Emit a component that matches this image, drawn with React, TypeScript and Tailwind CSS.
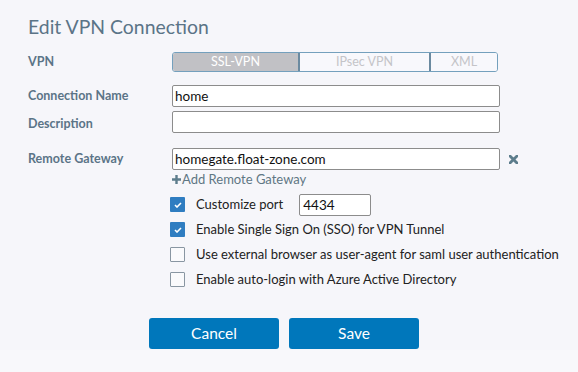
import React from 'react';

const labelCls = "w-[144px] shrink-0 text-[12.5px] font-bold text-[#5b7487]";
const inputCls = "h-[22px] w-[328px] rounded-[2px] border border-[#8c8c8c] bg-white px-[2px] text-[13.5px] text-[#111] leading-[20px]";

const Check: React.FC<{ checked?: boolean }> = ({ checked }) => (
  <span
    className={
      checked
        ? "flex h-[15px] w-[15px] items-center justify-center rounded-[1px] bg-[#2f7dc1]"
        : "h-[15px] w-[15px] rounded-[1px] border border-[#8996a2] bg-[#fafafc]"
    }
  >
    {checked && (
      <svg width="8" height="6" viewBox="0 0 8 6">
        <path d="M1 3 L3 5 L7 1" stroke="white" strokeWidth="1.6" fill="none" />
      </svg>
    )}
  </span>
);

const CheckRow: React.FC<{ checked?: boolean; label: string; children?: React.ReactNode }> = ({ checked, label, children }) => (
  <div className="flex h-[25px] items-center pl-[170px]">
    <Check checked={checked} />
    <span className="ml-[11px] text-[13px] text-[#222]">{label}</span>
    {children}
  </div>
);

export default function App() {
  return (
    <div className="flex h-[372px] w-[578px] flex-col bg-[#f6f6fa] font-['Lato',sans-serif]">
      <h1 className="mt-[14px] pl-[28px] text-[19.4px] leading-[26px] text-[#5b7487]">Edit VPN Connection</h1>

      <div className="mt-[12px] flex items-center pl-[28px]">
        <span className={labelCls}>VPN</span>
        <div className="flex h-[20px] w-[326px] overflow-hidden rounded-[3px] border border-[#74a0bd] text-[12.5px] leading-[18px]">
          <span className="w-[125px] bg-[#c1c1c5] text-center text-white">SSL-VPN</span>
          <span className="w-[131px] border-l-2 border-[#6b8aa0] bg-[#f8f8fc] text-center text-[#c4c4c8]">IPsec VPN</span>
          <span className="flex-1 border-l-2 border-[#6b8aa0] bg-[#f8f8fc] text-center text-[#c4c4c8]">XML</span>
        </div>
      </div>

      <div className="mt-[13px] flex items-center pl-[28px]">
        <span className={labelCls}>Connection Name</span>
        <div className={inputCls}>home</div>
      </div>

      <div className="mt-[4px] flex items-center pl-[28px]">
        <span className={`${labelCls} pt-[4px] leading-[16px]`}>Description</span>
        <div className={inputCls}></div>
      </div>

      <div className="mt-[15px] flex items-center pl-[28px]">
        <span className={labelCls}>Remote Gateway</span>
        <div className={inputCls}>homegate.float-zone.com</div>
        <svg className="ml-[9px]" width="9" height="9" viewBox="0 0 9 9">
          <path d="M1 1 L8 8 M8 1 L1 8" stroke="#5d7d8c" strokeWidth="2.8" strokeLinecap="square" />
        </svg>
      </div>

      <div className="flex items-center pl-[172px] text-[13px] leading-[18px] text-[#5f7784]">
        <svg width="9" height="9" viewBox="0 0 9 9" className="mr-[1px]">
          <path d="M4.5 0 V9 M0 4.5 H9" stroke="#5d7d8c" strokeWidth="2.4" />
        </svg>
        Add Remote Gateway
      </div>

      <div className="mt-[4px] flex flex-col">
        <CheckRow checked label="Customize port">
          <div className="ml-[16px] h-[22px] w-[72px] rounded-[2px] border border-[#8c8c8c] bg-white px-[3px] text-[13.5px] leading-[20px] text-[#111]">4434</div>
        </CheckRow>
        <CheckRow checked label="Enable Single Sign On (SSO) for VPN Tunnel" />
        <CheckRow label="Use external browser as user-agent for saml user authentication" />
        <CheckRow label="Enable auto-login with Azure Active Directory" />
      </div>

      <div className="mt-[26px] flex gap-[10px] pl-[149px]">
        <button className="h-[31px] w-[130px] rounded-[3px] bg-[#0077bb] text-[15.5px] text-white">Cancel</button>
        <button className="h-[31px] w-[130px] rounded-[3px] bg-[#0077bb] text-[15.5px] text-white">Save</button>
      </div>
      <div className="mt-[1px] flex-1 bg-[#f8f8fb]" />
    </div>
  );
}
